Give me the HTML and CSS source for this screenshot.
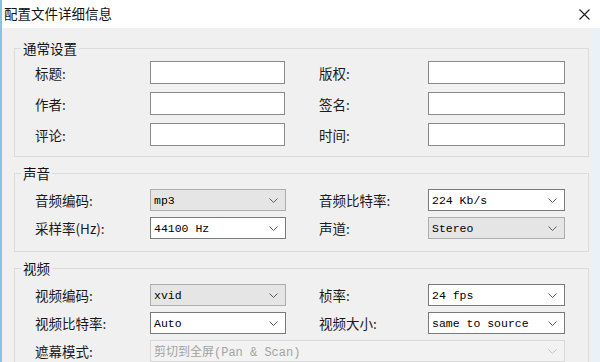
FILE: index.html
```html
<!DOCTYPE HTML>
<html>
    <head>
        <title>配置文件详细信息</title>
        <meta http-equiv="Content-Type" content="text/html; charset=UTF-8">
        <link rel="stylesheet" href="styles.css">
    </head>
    <body>
        <div class="window">
            <div class="titlebar">
                <span class="title">配置文件详细信息</span>
                <svg class="close" width="11" height="11" viewBox="0 0 11 11">
                    <path d="M0.5 0.5 L10.5 10.5 M10.5 0.5 L0.5 10.5" stroke="#1a1a1a" stroke-width="1.1" fill="none"/>
                </svg>
            </div>
            <div class="content">
                <fieldset class="group first">
                    <legend>通常设置</legend>
                    <div class="rows general">
                        <label>标题:</label><input class="text" type="text">
                        <label>版权:</label><input class="text wide" type="text">
                        <label>作者:</label><input class="text" type="text">
                        <label>签名:</label><input class="text wide" type="text">
                        <label>评论:</label><input class="text" type="text">
                        <label>时间:</label><input class="text wide" type="text">
                    </div>
                </fieldset>

                <fieldset class="group">
                    <legend>声音</legend>
                    <div class="rows">
                        <label>音频编码:</label>
                        <div class="combo list"><span>mp3</span><svg width="9" height="5"><polyline points="0.5,0.5 4.5,4.5 8.5,0.5" fill="none" stroke="#5c5c5c"/></svg></div>
                        <label>音频比特率:</label>
                        <div class="combo wide"><span>224 Kb/s</span><svg width="9" height="5"><polyline points="0.5,0.5 4.5,4.5 8.5,0.5" fill="none" stroke="#5c5c5c"/></svg></div>
                        <label>采样率(Hz):</label>
                        <div class="combo"><span>44100 Hz</span><svg width="9" height="5"><polyline points="0.5,0.5 4.5,4.5 8.5,0.5" fill="none" stroke="#5c5c5c"/></svg></div>
                        <label>声道:</label>
                        <div class="combo list wide"><span>Stereo</span><svg width="9" height="5"><polyline points="0.5,0.5 4.5,4.5 8.5,0.5" fill="none" stroke="#5c5c5c"/></svg></div>
                    </div>
                </fieldset>

                <fieldset class="group">
                    <legend>视频</legend>
                    <div class="rows">
                        <label>视频编码:</label>
                        <div class="combo list"><span>xvid</span><svg width="9" height="5"><polyline points="0.5,0.5 4.5,4.5 8.5,0.5" fill="none" stroke="#5c5c5c"/></svg></div>
                        <label>桢率:</label>
                        <div class="combo wide"><span>24 fps</span><svg width="9" height="5"><polyline points="0.5,0.5 4.5,4.5 8.5,0.5" fill="none" stroke="#5c5c5c"/></svg></div>
                        <label>视频比特率:</label>
                        <div class="combo"><span>Auto</span><svg width="9" height="5"><polyline points="0.5,0.5 4.5,4.5 8.5,0.5" fill="none" stroke="#5c5c5c"/></svg></div>
                        <label>视频大小:</label>
                        <div class="combo wide"><span>same to source</span><svg width="9" height="5"><polyline points="0.5,0.5 4.5,4.5 8.5,0.5" fill="none" stroke="#5c5c5c"/></svg></div>
                        <label>遮幕模式:</label>
                        <div class="combo disabled span"><span>剪切到全屏(Pan &amp; Scan)</span><svg width="9" height="5"><polyline points="0.5,0.5 4.5,4.5 8.5,0.5" fill="none" stroke="#c4c4c4"/></svg></div>
                    </div>
                </fieldset>
            </div>
        </div>
    </body>
</html>
```

FILE: styles.css
```css
html, body{
    margin: 0;
    padding: 0;
    height: 100%;
    overflow: hidden;
    background: #eaf2f8;
}
body{
    font-family: "Noto Sans CJK SC", "Noto Sans", sans-serif;
    font-size: 13.5px;
    color: #1a1a1a;
}
.window{
    width: 590px;
    height: 362px;
    border-left: 2px solid #86c3e4;
    display: flex;
    flex-direction: column;
}
.titlebar{
    height: 28px;
    flex: none;
    background: #fff;
    display: flex;
    align-items: center;
    justify-content: space-between;
    padding: 0 10px 2px 2px;
    box-sizing: border-box;
    width: 598px;
}
.title{
    line-height: 18px;
    color: #111;
}
.close{
    display: block;
    margin-top: 2px;
}
.content{
    flex: 1;
    background: #f0f0f0;
    padding-top: 11px;
    overflow: hidden;
}
.group{
    margin: 7px 3px 0 12px;
    padding: 7px 0 12px 6px;
    border: 1px solid #dcdcdc;
    min-width: 0;
}
.group.first{
    margin-top: 0;
    padding-top: 4px;
    padding-bottom: 10px;
}
.group legend{
    padding: 0 2px;
    line-height: 18px;
    color: #111;
}
.rows{
    padding-left: 14px;
    display: grid;
    grid-template-columns: 115px 169px 109px 137px;
    grid-auto-rows: 22px;
    row-gap: 6px;
    align-items: center;
}
.rows.general{
    grid-auto-rows: 23px;
    row-gap: 8px;
}
.rows label{
    line-height: 18px;
    color: #1a1a1a;
}
.text{
    width: 135px;
    height: 23px;
    box-sizing: border-box;
    margin: 0;
    border: 1px solid #8a8a8a;
    background: #fff;
    padding: 0 3px;
}
.text.wide{
    width: 137px;
}
.combo{
    width: 136px;
    height: 22px;
    box-sizing: border-box;
    border: 1px solid #7a7a7a;
    background: #fff;
    display: flex;
    align-items: center;
    justify-content: space-between;
    padding: 0 7px 0 3px;
    font-family: "Liberation Mono", "Noto Sans CJK SC", monospace;
    font-size: 11.5px;
    color: #000;
}
.combo.wide{
    width: 137px;
}
.combo.list{
    background: #e5e5e5;
    border-color: #adadad;
}
.combo.disabled{
    background: #f2f2f2;
    border-color: #d9d9d9;
    color: #a3a3a3;
    font-size: 12px;
}
.combo.span{
    grid-column: 2 / 5;
    width: 415px;
}
.combo svg{
    display: block;
    flex: none;
}
```
